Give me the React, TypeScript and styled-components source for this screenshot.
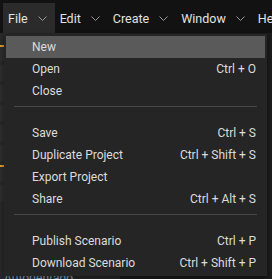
import styled, { createGlobalStyle } from "styled-components";

const GlobalStyle = createGlobalStyle`
  html, body {
    margin: 0;
    padding: 0;
    background: #1e1e1e;
    font-family: Roboto, "Liberation Sans", sans-serif;
  }
`;

const Page = styled.div`
  position: relative;
  width: 272px;
  height: 279px;
  overflow: hidden;
  background: #1e1e1e;
`;

const MenuBar = styled.nav`
  height: 33px;
  background: #121212;
  display: flex;
  align-items: flex-end;
  padding-left: 3px;
  white-space: nowrap;
`;

const MenuTab = styled.div<{ $open?: boolean }>`
  height: 30px;
  display: flex;
  align-items: center;
  padding: 0 8px 0 5px;
  background: ${({ $open }) => ($open ? "#2b2b2b" : "transparent")};
  color: #e2e2e2;
  font-size: 12.5px;

  svg {
    margin-left: 10px;
  }
`;

const Workspace = styled.div`
  display: flex;
  height: 246px;
`;

const SidePanel = styled.div`
  width: 120px;
  background: #2a2a2a;
  display: flex;
  flex-direction: column;
  padding-top: 12px;
  gap: 4px;
`;

const PanelRow = styled.div<{ $accent?: string }>`
  height: 14px;
  border-top: 2px solid ${({ $accent }) => $accent ?? "transparent"};
  background: #303030;
`;

const Canvas = styled.div`
  flex: 1;
  background: #1c1c1c;
`;

const Footer = styled.div`
  position: absolute;
  left: 4px;
  bottom: -6px;
  color: #8fb8e8;
  font-size: 12px;
`;

const Dropdown = styled.div`
  position: absolute;
  top: 34px;
  left: 4px;
  width: 263px;
  box-sizing: border-box;
  padding: 2px;
  background: #252525;
  box-shadow: 0 2px 6px rgba(0, 0, 0, 0.5);
`;

const Item = styled.div<{ $active?: boolean }>`
  height: 22px;
  display: flex;
  align-items: center;
  justify-content: space-between;
  padding: 0 9px 0 26px;
  background: ${({ $active }) => ($active ? "#5a5a5a" : "transparent")};
  color: #dcdcdc;
  font-size: 12px;
`;

const Shortcut = styled.span`
  color: #dcdcdc;
`;

const Separator = styled.div`
  height: 1px;
  margin: 4px 8px 15px;
  background: #474747;
`;

const Chevron = () => (
  <svg width="9" height="5" viewBox="0 0 9 5" fill="none">
    <path d="M0.5 0.5 L4.5 4.5 L8.5 0.5" stroke="#9a9a9a" strokeWidth="1" />
  </svg>
);

const menus = ["File", "Edit", "Create", "Window", "Help"];

type Entry = { label: string; shortcut?: string } | "sep";

const entries: Entry[] = [
  { label: "New" },
  { label: "Open", shortcut: "Ctrl + O" },
  { label: "Close" },
  "sep",
  { label: "Save", shortcut: "Ctrl + S" },
  { label: "Duplicate Project", shortcut: "Ctrl + Shift + S" },
  { label: "Export Project" },
  { label: "Share", shortcut: "Ctrl + Alt + S" },
  "sep",
  { label: "Publish Scenario", shortcut: "Ctrl + P" },
  { label: "Download Scenario", shortcut: "Ctrl + Shift + P" },
];

export default function App() {
  return (
    <Page>
      <GlobalStyle />
      <MenuBar>
        {menus.map((m, i) => (
          <MenuTab key={m} $open={i === 0}>
            {m}
            <Chevron />
          </MenuTab>
        ))}
      </MenuBar>

      <Workspace>
        <SidePanel>
          <PanelRow $accent="#e0a030" />
          <PanelRow />
          <PanelRow />
          <PanelRow />
          <PanelRow />
          <PanelRow />
          <PanelRow $accent="#e0a030" />
          <PanelRow />
        </SidePanel>
        <Canvas />
      </Workspace>
      <Footer>Autorientado</Footer>

      <Dropdown>
        {entries.map((e, i) =>
          e === "sep" ? (
            <Separator key={i} />
          ) : (
            <Item key={i} $active={i === 0}>
              <span>{e.label}</span>
              {e.shortcut && <Shortcut>{e.shortcut}</Shortcut>}
            </Item>
          )
        )}
      </Dropdown>
    </Page>
  );
}
